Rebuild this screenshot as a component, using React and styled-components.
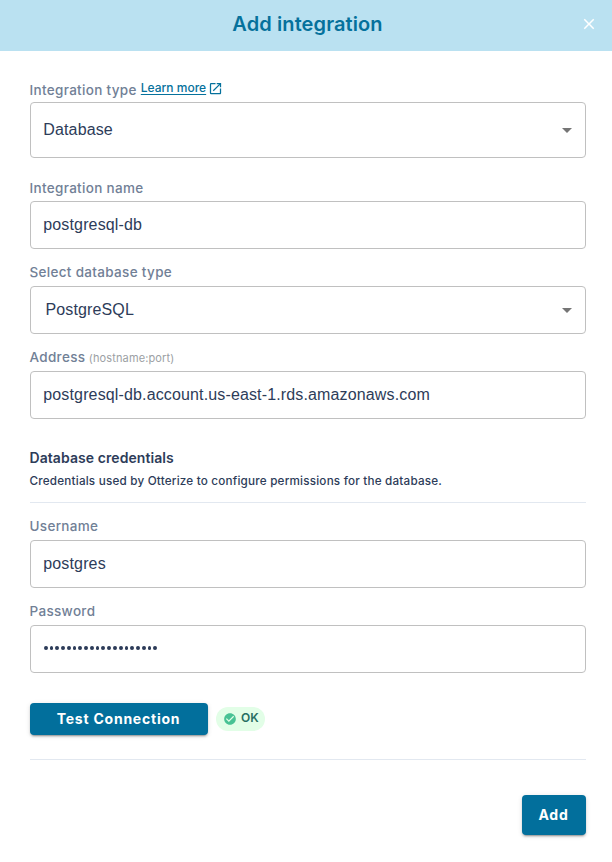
import React from "react";
import styled, { createGlobalStyle } from "styled-components";
import { MdArrowDropDown, MdCheckCircle, MdClose, MdOpenInNew } from "react-icons/md";

const GlobalStyle = createGlobalStyle`
  * { box-sizing: border-box; }
  body { margin: 0; background: #fff; font-family: Inter, sans-serif; color: #2d3c59; }
`;

const Dialog = styled.main`
  width: 612px;
  height: 862px;
  background: #fff;
`;

const Header = styled.header`
  display: grid;
  grid-template-columns: 49px 1fr 46px;
  align-items: center;
  height: 51px;
  padding-bottom: 3px;
  background: #bae1f1;
`;

const Title = styled.h1`
  grid-column: 2;
  margin: 0;
  text-align: center;
  font-size: 20px;
  font-weight: 600;
  line-height: 24px;
  letter-spacing: 0.1px;
  color: #05719c;
`;

const CloseButton = styled.button`
  display: flex;
  justify-content: center;
  padding: 0;
  border: 0;
  background: none;
  color: #fff;
  font-size: 18px;
`;

const Form = styled.div`
  padding: 29px 26px 0 30px;
`;

const Field = styled.div`
  margin-top: ${(p) => p.$top || 0}px;
`;

const LabelRow = styled.div`
  display: flex;
  align-items: center;
  height: 20px;
  margin-bottom: ${(p) => p.$gap ?? 4}px;
`;

const Label = styled.label`
  margin-left: -0.5px;
  font-size: 13.5px;
  font-weight: 500;
  line-height: 20px;
  letter-spacing: 0.32px;
  color: #718096;
  white-space: nowrap;
`;

const Hint = styled.span`
  margin: 2px 0 0 3.5px;
  font-size: 11px;
  line-height: 18px;
  letter-spacing: 0.12px;
  color: #9c9fa4;
`;

const LearnMore = styled.a`
  display: flex;
  align-items: center;
  gap: 2px;
  margin: -4px 0 0 4px;
  font-size: 12px;
  font-weight: 500;
  line-height: 18px;
  color: #05719c;

  span {
    text-decoration: underline;
    text-underline-offset: 2px;
  }
  svg { font-size: 15px; }
`;

const Control = styled.div`
  display: flex;
  align-items: center;
  justify-content: space-between;
  height: ${(p) => p.$height || 48}px;
  padding: 0 6px 0 ${(p) => p.$indent || 12.3}px;
  border: 1px solid #c0c0c0;
  border-radius: 4px;
  font-family: "Liberation Sans", Arial, sans-serif;
  font-size: 16px;
  line-height: 24px;
  letter-spacing: 0.14px;

  svg { font-size: 24px; color: #757575; }
`;

const Input = styled.input`
  width: 100%;
  padding: 0;
  border: 0;
  outline: 0;
  background: none;
  font: inherit;
  letter-spacing: inherit;
  color: inherit;
`;

const Dots = styled.div`
  display: flex;
  gap: 2px;
  padding-bottom: 2px;
  margin-left: 0.5px;

  i {
    width: 3.77px;
    height: 4px;
    border-radius: 50%;
    background: #2d3c59;
  }
`;

const SectionTitle = styled.h2`
  margin: 29px 0 0 -0.5px;
  font-size: 14px;
  font-weight: 600;
  line-height: 20px;
  letter-spacing: 0.07px;
`;

const SectionText = styled.p`
  margin: 4px 0 0 -0.5px;
  font-size: 11.7px;
  font-weight: 500;
  line-height: 18px;
  letter-spacing: 0.2px;
`;

const Divider = styled.hr`
  height: 1px;
  margin: ${(p) => p.$top}px 0 0;
  border: 0;
  background: #e2e8f0;
`;

const TestRow = styled.div`
  display: flex;
  align-items: center;
  gap: 8px;
  height: 32px;
  margin-top: 30px;
`;

const Button = styled.button`
  width: ${(p) => p.$width}px;
  height: ${(p) => p.$height}px;
  padding: 0 1px 2px 0;
  border: 0;
  border-radius: 4px;
  background: #026f9c;
  box-shadow: 0 3px 1px -2px rgba(0, 0, 0, 0.2), 0 2px 2px rgba(0, 0, 0, 0.14), 0 1px 5px rgba(0, 0, 0, 0.12);
  color: #fff;
  font-family: Inter, sans-serif;
  font-size: 14px;
  font-weight: 700;
  letter-spacing: ${(p) => p.$spacing}px;
`;

const Status = styled.div`
  display: flex;
  align-items: center;
  gap: 4px;
  width: 49px;
  height: 24px;
  padding-left: 7px;
  border-radius: 12px;
  background: #e2fee7;
  color: #276f62;
  font-size: 12px;
  font-weight: 600;

  svg { font-size: 14px; color: #48c294; }
  span { margin-top: -3px; }
`;

const Footer = styled.footer`
  display: flex;
  justify-content: flex-end;
  margin-top: 35px;
`;

function TextField({ label, hint, value, top, gap }) {
  return (
    <Field $top={top}>
      <LabelRow $gap={gap}>
        <Label>{label}</Label>
        {hint && <Hint>{hint}</Hint>}
      </LabelRow>
      <Control>
        <Input defaultValue={value} aria-label={label} />
      </Control>
    </Field>
  );
}

export default function App() {
  return (
    <>
      <GlobalStyle />
      <Dialog>
        <Header>
          <Title>Add integration</Title>
          <CloseButton aria-label="Close"><MdClose /></CloseButton>
        </Header>
        <Form>
          <Field>
            <LabelRow $gap={2}>
              <Label>Integration type</Label>
              <LearnMore><span>Learn more</span><MdOpenInNew /></LearnMore>
            </LabelRow>
            <Control $height={56}>Database<MdArrowDropDown /></Control>
          </Field>
          <TextField label="Integration name" value="postgresql-db" top={20} gap={3} />
          <Field $top={13}>
            <LabelRow><Label>Select database type</Label></LabelRow>
            <Control $indent={14.4}>PostgreSQL<MdArrowDropDown /></Control>
          </Field>
          <TextField label="Address" hint="(hostname:port)" value="postgresql-db.account.us-east-1.rds.amazonaws.com" top={13} />
          <SectionTitle>Database credentials</SectionTitle>
          <SectionText>Credentials used by Otterize to configure permissions for the database.</SectionText>
          <Divider $top={12} />
          <TextField label="Username" value="postgres" top={13} />
          <Field $top={13}>
            <LabelRow><Label>Password</Label></LabelRow>
            <Control>
              <Dots>{Array.from({ length: 20 }, (_, i) => <i key={i} />)}</Dots>
            </Control>
          </Field>
          <TestRow>
            <Button $width={178} $height={32} $spacing={0.77}>Test Connection</Button>
            <Status><MdCheckCircle /><span>OK</span></Status>
          </TestRow>
          <Divider $top={24} />
          <Footer><Button $width={64} $height={40} $spacing={0.77}>Add</Button></Footer>
        </Form>
      </Dialog>
    </>
  );
}
